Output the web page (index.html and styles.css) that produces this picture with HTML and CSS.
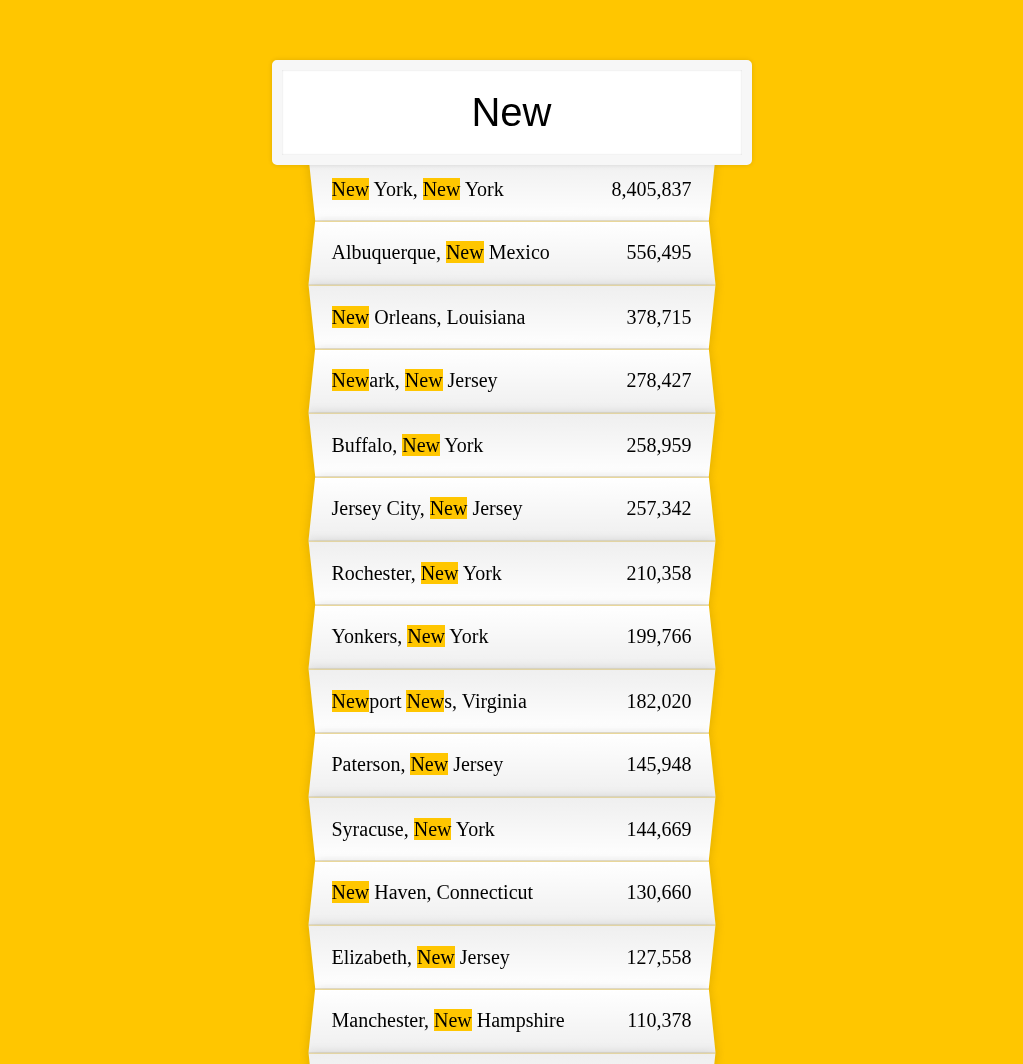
FILE: index.html
```html
<!DOCTYPE html>
<html lang="en">
<head>
<meta charset="UTF-8">
<title>Type Ahead</title>
<link rel="stylesheet" href="styles.css">
</head>
<body>
<form class="search-form">
  <input type="text" class="search" placeholder="City or State" value="New">
  <ul class="suggestions">
    <li><span class="name"><span class="hl">New</span> York, <span class="hl">New</span> York</span><span class="population">8,405,837</span></li>
    <li><span class="name">Albuquerque, <span class="hl">New</span> Mexico</span><span class="population">556,495</span></li>
    <li><span class="name"><span class="hl">New</span> Orleans, Louisiana</span><span class="population">378,715</span></li>
    <li><span class="name"><span class="hl">New</span>ark, <span class="hl">New</span> Jersey</span><span class="population">278,427</span></li>
    <li><span class="name">Buffalo, <span class="hl">New</span> York</span><span class="population">258,959</span></li>
    <li><span class="name">Jersey City, <span class="hl">New</span> Jersey</span><span class="population">257,342</span></li>
    <li><span class="name">Rochester, <span class="hl">New</span> York</span><span class="population">210,358</span></li>
    <li><span class="name">Yonkers, <span class="hl">New</span> York</span><span class="population">199,766</span></li>
    <li><span class="name"><span class="hl">New</span>port <span class="hl">New</span>s, Virginia</span><span class="population">182,020</span></li>
    <li><span class="name">Paterson, <span class="hl">New</span> Jersey</span><span class="population">145,948</span></li>
    <li><span class="name">Syracuse, <span class="hl">New</span> York</span><span class="population">144,669</span></li>
    <li><span class="name"><span class="hl">New</span> Haven, Connecticut</span><span class="population">130,660</span></li>
    <li><span class="name">Elizabeth, <span class="hl">New</span> Jersey</span><span class="population">127,558</span></li>
    <li><span class="name">Manchester, <span class="hl">New</span> Hampshire</span><span class="population">110,378</span></li>
    <li><span class="name">Las Cruces, <span class="hl">New</span> Mexico</span><span class="population">101,324</span></li>
    <li><span class="name">Albany, <span class="hl">New</span> York</span><span class="population">98,424</span></li>
  </ul>
</form>
</body>
</html>
```
FILE: styles.css
```css
html {
  box-sizing: border-box;
  background: #ffc600;
  font-family: "Liberation Serif", "Times New Roman", serif;
  font-size: 20px;
  font-weight: 400;
}

*, *::before, *::after {
  box-sizing: inherit;
}

body {
  margin: 0;
}

.search-form {
  max-width: 400px;
  margin: 50px auto;
}

.search {
  display: block;
  width: 120%;
  margin: 0;
  padding: 20px;
  position: relative;
  left: -10%;
  top: 10px;
  z-index: 2;
  text-align: center;
  outline: 0;
  border: 10px solid #f7f7f7;
  border-radius: 5px;
  background: #fff;
  color: #000;
  font-family: "Liberation Sans", Arial, sans-serif;
  font-size: 40px;
  font-weight: 400;
  box-shadow: 0 0 5px rgba(0, 0, 0, 0.12), inset 0 0 2px rgba(0, 0, 0, 0.19);
}

.suggestions {
  margin: 0;
  padding: 0;
  position: relative;
}

.suggestions li {
  position: relative;
  list-style: none;
  margin: 0;
  padding: 20px 20px 21px;
  display: flex;
  justify-content: space-between;
  text-transform: capitalize;
  line-height: 23px;
  color: #000;
}

/* the folded paper strip is drawn behind the text */
.suggestions li::before {
  content: "";
  position: absolute;
  inset: 0;
  z-index: -1;
  border-bottom: 1px solid #d9ceab;
  box-shadow: 0 0 10px rgba(0, 0, 0, 0.14);
}

.suggestions li:nth-child(even) {
  transform: translateY(2px);
}

.suggestions li:nth-child(even)::before {
  transform: perspective(100px) rotateX(3deg) scale(1.001);
  background: linear-gradient(to bottom, #ffffff 0%, #efefef 100%);
}

.suggestions li:nth-child(odd) {
  transform: translateY(3px);
}

.suggestions li:nth-child(odd)::before {
  transform: perspective(100px) rotateX(-3deg);
  background: linear-gradient(to top, #ffffff 0%, #efefef 100%);
}

.population {
  font-size: 20px;
}

.hl {
  background: #ffc600;
}
```
